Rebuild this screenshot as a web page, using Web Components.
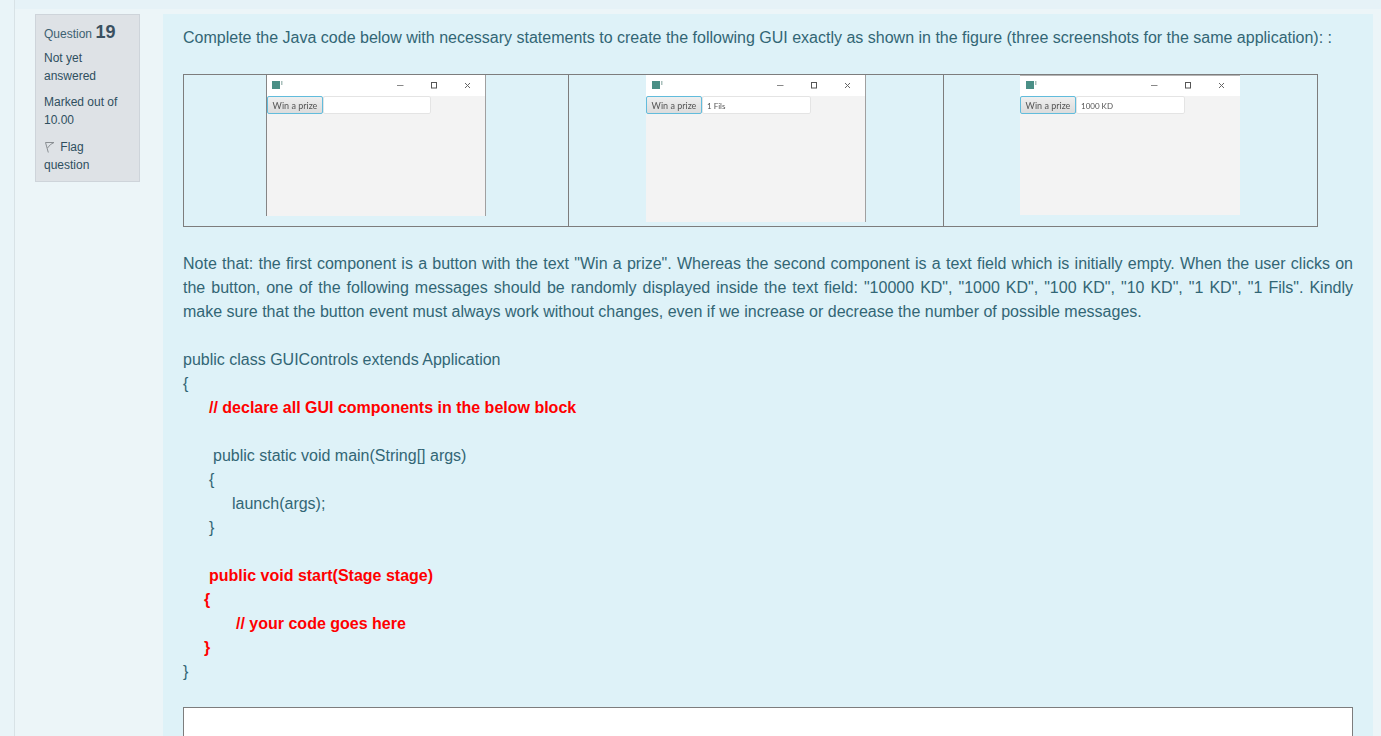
<!DOCTYPE html>
<html>
<head>
<meta charset="utf-8">
<title>Question 19</title>
<style>
  html, body { margin: 0; height: 100%; overflow: hidden; background: #ecf5f8; }
  body { font-family: "Liberation Sans", Arial, sans-serif; color: #2f6473; }
</style>
</head>
<body>
<template id="quiz-page-tpl">
  <style>
    :host { display: flex; height: 736px; overflow: hidden; }
    .gutter { width: 14px; flex: none; border-right: 1px solid #d8e2e6; background: #e9f4f8; }
    .main { flex: 1; display: flex; flex-direction: column; min-width: 0; }
    .topband { height: 9px; flex: none; background: #e6f2f7; }
    .row { display: flex; align-items: flex-start; padding: 5px 8px 0 20px; gap: 23px; }
  </style>
  <div class="gutter"></div>
  <div class="main">
    <div class="topband"></div>
    <div class="row">
      <slot name="info"></slot>
      <slot></slot>
    </div>
  </div>
</template>

<template id="que-info-tpl">
  <style>
    :host {
      display: block; flex: none; box-sizing: border-box; width: 105px; height: 168px;
      padding: 6px 8px 0; background: #dee2e6; border: 1px solid #ced4da;
      font-size: 12px; line-height: 18px; color: #2f4f5f;
    }
    .no { height: 22px; line-height: 22px; color: #3d6171; margin-bottom: 6px; }
    .no b { font-size: 18px; color: #3a5060; }
    p { margin: 0 0 8px; }
    p:last-of-type { margin-bottom: 9px; }
    svg { vertical-align: -2px; margin-right: 1px; }
  </style>
  <div class="no">Question <b>19</b></div>
  <p>Not yet answered</p>
  <p>Marked out of 10.00</p>
  <div><svg width="12" height="12" viewBox="0 0 12 12" fill="none" stroke="#8a8f93" stroke-width="1"><path d="M1.5 1.5l2.8 10"/><path d="M1.5 1.5h8.5L6.5 3.5 3.5 7"/></svg> Flag question</div>
</template>

<template id="que-content-tpl">
  <style>
    :host {
      display: block; flex: 1; min-width: 0; box-sizing: border-box; height: 760px;
      padding: 12px 20px 0; background: #def2f8;
      font-size: 16px; line-height: 24px; color: #326675;
    }
  </style>
  <slot></slot>
</template>

<template id="shot-table-tpl">
  <style>
    :host {
      display: grid; grid-template-columns: 384px 375px 374px; box-sizing: border-box;
      width: 1135px; height: 153px; margin: 24px 0 25px;
      border: 1px solid #7d7d7d;
    }
    ::slotted(fx-window:nth-child(2)) { border-left: 1px solid #7d7d7d; }
    ::slotted(fx-window:nth-child(3)) { border-left: 1px solid #7d7d7d; }
  </style>
  <slot></slot>
</template>

<template id="fx-window-tpl">
  <style>
    :host { display: block; box-sizing: border-box; height: 151px; }
    .win { width: 220px; box-sizing: border-box; background: #f3f3f3; font-family: Lato, "Liberation Sans", sans-serif; font-size: 9px; color: #555; }
    :host([edge=left]) .win { border-left: 1px solid #858585; border-right: 1px solid #a0a0a0; }
    :host([edge=right]) .win { border-right: 1px solid #a0a0a0; }
    :host([edge=top]) .title { border-top: 1px solid #b5b5b5; }
    .frame { filter: blur(0.6px); height: 100%; }
    .title { height: 21px; background: #fff; display: flex; align-items: center; padding-left: 5px; box-sizing: border-box; }
    :host([edge=left]) .title { padding-left: 4px; }
    .title svg { display: block; }
    .bar { display: flex; height: 18px; }
    .btn { width: 56px; box-sizing: border-box; border: 1.5px solid #62bcdc; border-radius: 2px; background: linear-gradient(#efefef, #dcdcdc); line-height: 17px; text-align: center; white-space: nowrap; }
    .field { width: 109px; box-sizing: border-box; background: #fff; border: 1px solid #e4e4e4; border-radius: 2px; padding-left: 4px; font-size: 8px; line-height: 18px; white-space: nowrap; }
    :host([edge=left]) .field { width: 108px; }
  </style>
  <div class="win">
    <div class="frame">
      <div class="title">
        <svg width="212" height="12" viewBox="0 0 212 12">
          <rect x="1" y="1" width="8" height="8" fill="#4a8f86"/>
          <rect x="10" y="1" width="1.5" height="4" fill="#a9bfbb"/>
          <path d="M126 5.5h6.5" stroke="#888" stroke-width="1"/>
          <rect x="160.5" y="2.5" width="5" height="5.5" fill="none" stroke="#555" stroke-width="1"/>
          <path d="M194 3l5 5M199 3l-5 5" stroke="#666" stroke-width="1" fill="none"/>
        </svg>
      </div>
      <div class="bar">
        <div class="btn">Win a prize</div>
        <div class="field"></div>
      </div>
    </div>
  </div>
</template>

<template id="code-line-tpl">
  <style>
    :host { display: block; height: 24px; white-space: nowrap; }
    :host([alert]) { color: #f00; font-weight: bold; }
  </style>
  <slot></slot>
</template>

<quiz-page>
  <que-info slot="info"></que-info>
  <que-content>
    <div>Complete the Java code below with necessary statements to create the following GUI exactly as shown in the figure (three screenshots for the same application): :</div>
    <shot-table>
      <fx-window left="82" win-height="141" edge="left"></fx-window>
      <fx-window left="77" win-height="147" value="1 Fils" edge="right"></fx-window>
      <fx-window left="76" win-height="140" value="1000 KD" edge="top"></fx-window>
    </shot-table>
    <div style="text-align:justify">Note that: the first component is a button with the text "Win a prize". Whereas the second component is a text field which is initially empty. When the user clicks on the button, one of the following messages should be randomly displayed inside the text field: "10000 KD", "1000 KD", "100 KD", "10 KD", "1 KD", "1 Fils". Kindly make sure that the button event must always work without changes, even if we increase or decrease the number of possible messages.</div>
    <div style="height:24px"></div>
    <code-line>public class GUIControls extends Application</code-line>
    <code-line>{</code-line>
    <code-line alert style="padding-left:26px">// declare all GUI components in the below block</code-line>
    <code-line></code-line>
    <code-line style="padding-left:30px">public static void main(String[] args)</code-line>
    <code-line style="padding-left:26px">{</code-line>
    <code-line style="padding-left:49px">launch(args);</code-line>
    <code-line style="padding-left:26px">}</code-line>
    <code-line></code-line>
    <code-line alert style="padding-left:26px">public void start(Stage stage)</code-line>
    <code-line alert style="padding-left:21px">{</code-line>
    <code-line alert style="padding-left:53px">// your code goes here</code-line>
    <code-line alert style="padding-left:21px">}</code-line>
    <code-line>}</code-line>
    <answer-box></answer-box>
  </que-content>
</quiz-page>

<script>
function attachTpl(el, id) {
  el.attachShadow({mode: 'open'}).appendChild(document.getElementById(id).content.cloneNode(true));
  return el.shadowRoot;
}

class QuizPage extends HTMLElement {
  constructor() { super(); attachTpl(this, 'quiz-page-tpl'); }
}
class QueInfo extends HTMLElement {
  constructor() { super(); attachTpl(this, 'que-info-tpl'); }
}
class QueContent extends HTMLElement {
  constructor() { super(); attachTpl(this, 'que-content-tpl'); }
}
class ShotTable extends HTMLElement {
  constructor() { super(); attachTpl(this, 'shot-table-tpl'); }
}
class CodeLine extends HTMLElement {
  constructor() { super(); attachTpl(this, 'code-line-tpl'); }
}
class FxWindow extends HTMLElement {
  constructor() { super(); attachTpl(this, 'fx-window-tpl'); }
  connectedCallback() {
    let root = this.shadowRoot;
    let win = root.querySelector('.win');
    win.style.marginLeft = this.getAttribute('left') + 'px';
    win.style.height = this.getAttribute('win-height') + 'px';
    root.querySelector('.field').textContent = this.getAttribute('value') || '';
  }
}
class AnswerBox extends HTMLElement {
  constructor() {
    super();
    this.attachShadow({mode: 'open'}).innerHTML = `
      <style>
        :host { display: block; box-sizing: border-box; height: 60px; margin-top: 23px; background: #fff; border: 1px solid #7d7d7d; }
      </style>`;
  }
}

customElements.define('quiz-page', QuizPage);
customElements.define('que-info', QueInfo);
customElements.define('que-content', QueContent);
customElements.define('shot-table', ShotTable);
customElements.define('fx-window', FxWindow);
customElements.define('code-line', CodeLine);
customElements.define('answer-box', AnswerBox);
</script>
</body>
</html>
